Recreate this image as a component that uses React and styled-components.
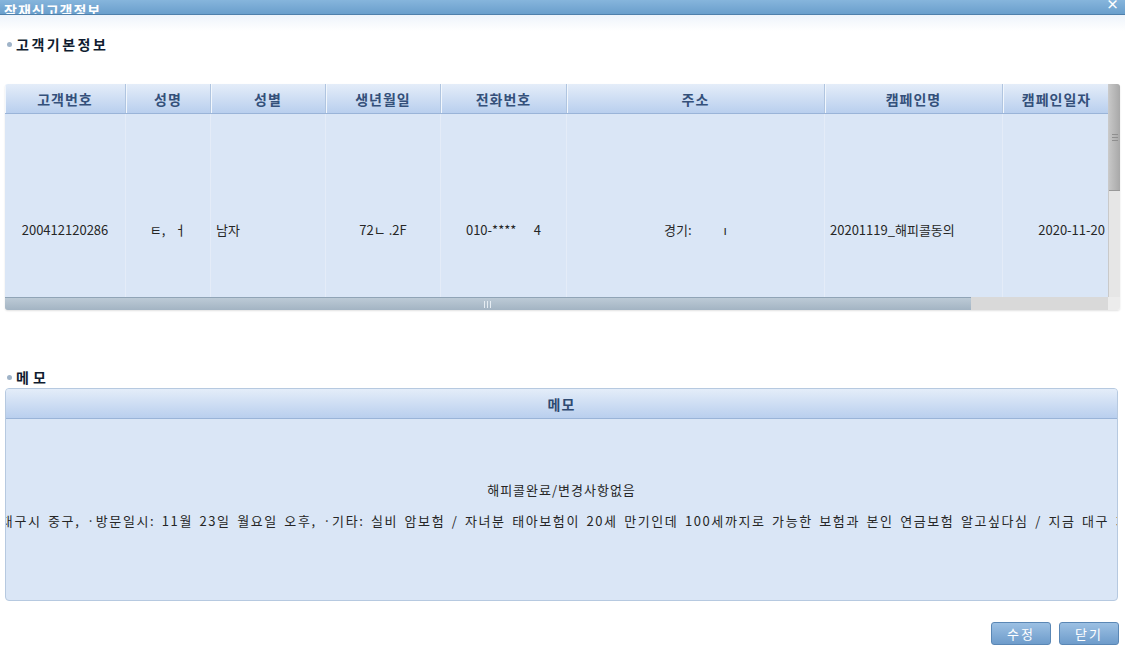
import React from 'react';
import styled, { createGlobalStyle } from 'styled-components';

const GlobalStyle = createGlobalStyle`
  html, body {
    margin: 0;
    padding: 0;
    background: #fff;
    font-family: "Noto Sans CJK KR", "Noto Sans", sans-serif;
  }
`;

const Page = styled.div`
  width: 1125px;
  height: 646px;
  overflow: hidden;
  background: #fff;
`;

const TitleBar = styled.div`
  height: 14px;
  overflow: hidden;
  display: flex;
  justify-content: space-between;
  align-items: flex-end;
  padding: 0 6px 0 4px;
  background: linear-gradient(#86b5dc, #6a9fcc);
  border-bottom: 1px solid #4f80ab;
`;

const TitleText = styled.span`
  color: #fff;
  font-size: 14px;
  font-weight: bold;
  line-height: 14px;
  margin-bottom: -3px;
  letter-spacing: 1px;
`;

const CloseMark = styled.span`
  color: #fff;
  font-size: 13px;
  font-weight: bold;
  line-height: 13px;
  margin-bottom: 4px;
`;

const Fade = styled.div`
  height: 16px;
  background: linear-gradient(#eef4fb, #fff);
`;

const Content = styled.div`
  padding: 0 5px;
`;

const SectionTitle = styled.div`
  display: flex;
  align-items: center;
  gap: 3px;
  height: 18px;
  margin-top: ${(p) => p.$top}px;
  font-size: 14px;
  font-weight: bold;
  letter-spacing: ${(p) => p.$spacing}px;
  color: #0f1c30;

  &::before {
    content: '';
    width: 5px;
    height: 5px;
    border-radius: 50%;
    background: #9fb3c8;
    margin-left: 2px;
    margin-right: 1px;
  }
`;

const Grid = styled.div`
  margin-top: 31px;
  width: 1115px;
  height: 226px;
  display: grid;
  grid-template-columns: 1103px 12px;
  grid-template-rows: 213px 13px;
  border-radius: 3px;
  box-shadow: 0 1px 2px rgba(0, 0, 0, 0.12);
  overflow: hidden;
`;

const GridMain = styled.div`
  display: flex;
  flex-direction: column;
  overflow: hidden;
`;

const cols = [121, 85, 115, 115, 126, 258, 178, 108];

const HeaderRow = styled.div`
  display: grid;
  grid-template-columns: ${cols.map((c) => c + 'px').join(' ')};
  height: 30px;
  flex: none;
  background: linear-gradient(#e4edf9, #b9cfee);
  border-bottom: 1px solid #9ab4d8;
  box-sizing: border-box;
`;

const HeadCell = styled.div`
  display: flex;
  align-items: center;
  justify-content: center;
  font-size: 14px;
  font-weight: bold;
  color: #34507a;
  letter-spacing: 1px;
  border-right: 1px solid #b0c5e0;
  box-shadow: inset 1px 0 0 #f2f7fd;
  white-space: nowrap;
  overflow: hidden;
`;

const BodyView = styled.div`
  flex: 1;
  overflow: hidden;
  background: #dae6f6;
`;

const DataRow = styled.div`
  display: grid;
  grid-template-columns: ${cols.map((c) => c + 'px').join(' ')};
  height: 230px;
`;

const Cell = styled.div`
  display: flex;
  align-items: center;
  justify-content: ${(p) => p.$align || 'center'};
  padding: 0 5px;
  font-size: 13px;
  color: #262626;
  border-right: 1px solid #e4ecf8;
  white-space: pre;
  overflow: hidden;
`;

const VScroll = styled.div`
  background: #e6e6e6;
  border-left: 1px solid #c9c9c9;
  display: flex;
  flex-direction: column;
`;

const VThumb = styled.div`
  height: 106px;
  display: flex;
  align-items: center;
  justify-content: center;
  background: linear-gradient(90deg, #c6c6c6, #a8a8a8);
  border-bottom: 1px solid #999;
`;

const VGrip = styled.div`
  width: 6px;
  height: 7px;
  background: repeating-linear-gradient(#8f8f8f 0 1px, transparent 1px 3px);
`;

const HScroll = styled.div`
  background: #d9d9d9;
  display: flex;
`;

const HThumb = styled.div`
  width: 966px;
  height: 100%;
  display: flex;
  align-items: center;
  justify-content: center;
  background: linear-gradient(#bccad6, #a3b4c3);
  border-top: 1px solid #90a4b6;
  box-sizing: border-box;
`;

const HGrip = styled.div`
  width: 8px;
  height: 7px;
  background: repeating-linear-gradient(90deg, #e6edf3 0 1px, transparent 1px 3px);
`;

const Corner = styled.div`
  background: #ececec;
`;

const MemoBox = styled.div`
  margin-top: 2px;
  width: 1113px;
  height: 213px;
  border: 1px solid #b6c9e0;
  border-radius: 4px;
  overflow: hidden;
  box-sizing: border-box;
  display: flex;
  flex-direction: column;
  background: #dae6f6;
`;

const MemoHead = styled.div`
  height: 30px;
  flex: none;
  display: flex;
  align-items: center;
  justify-content: center;
  background: linear-gradient(#e4edf9, #b9cfee);
  border-bottom: 1px solid #9ab4d8;
  box-sizing: border-box;
  font-size: 14px;
  font-weight: bold;
  color: #2f4a72;
  letter-spacing: 1px;
`;

const MemoBody = styled.div`
  flex: 1;
  display: flex;
  flex-direction: column;
  align-items: center;
  justify-content: center;
  padding-bottom: 9px;
  overflow: hidden;
`;

const MemoLine = styled.div`
  font-size: 13px;
  line-height: 31px;
  letter-spacing: ${(p) => p.$spacing || 1}px;
  word-spacing: 2px;
  color: #262626;
  white-space: nowrap;
`;

const ButtonBar = styled.div`
  display: flex;
  justify-content: flex-end;
  gap: 8px;
  margin-top: 21px;
  padding-right: 1px;
`;

const Button = styled.button`
  width: 60px;
  height: 23px;
  padding: 0;
  border: 1px solid #5a87b5;
  border-radius: 3px;
  background: linear-gradient(#9cc0e3, #6e9ccb);
  color: #fff;
  font-family: inherit;
  font-size: 13px;
  letter-spacing: 2px;
`;

const columns = ['고객번호', '성명', '성별', '생년월일', '전화번호', '주소', '캠페인명', '캠페인일자'];

const row = [
  { v: '200412120286' },
  { v: 'ㅌ,   ㅓ' },
  { v: '남자', a: 'flex-start' },
  { v: '72ㄴ .2F' },
  { v: '010-****      4' },
  { v: '경기:           ı' },
  { v: '20201119_해피콜동의', a: 'flex-start' },
  { v: '2020-11-20', a: 'flex-end' },
];

const memo =
  '·주소: 대구시 중구, ·방문일시: 11월 23일 월요일 오후, ·기타: 실비 암보험 / 자녀분 태아보험이 20세 만기인데 100세까지로 가능한 보험과 본인 연금보험 알고싶다심 / 지금 대구 지역에서';

export default function App() {
  return (
    <Page>
      <GlobalStyle />
      <TitleBar>
        <TitleText>잠재신고객정보</TitleText>
        <CloseMark>×</CloseMark>
      </TitleBar>
      <Fade />
      <Content>
        <SectionTitle $top={4} $spacing={2.5}>고객기본정보</SectionTitle>
        <Grid>
          <GridMain>
            <HeaderRow>
              {columns.map((c) => (
                <HeadCell key={c}>{c}</HeadCell>
              ))}
            </HeaderRow>
            <BodyView>
              <DataRow>
                {row.map((c, i) => (
                  <Cell key={i} $align={c.a}>{c.v}</Cell>
                ))}
              </DataRow>
            </BodyView>
          </GridMain>
          <VScroll>
            <VThumb>
              <VGrip />
            </VThumb>
          </VScroll>
          <HScroll>
            <HThumb>
              <HGrip />
            </HThumb>
          </HScroll>
          <Corner />
        </Grid>
        <SectionTitle $top={58} $spacing={4}>메모</SectionTitle>
        <MemoBox>
          <MemoHead>메모</MemoHead>
          <MemoBody>
            <MemoLine>해피콜완료/변경사항없음</MemoLine>
            <MemoLine $spacing={1.6}>{memo}</MemoLine>
          </MemoBody>
        </MemoBox>
        <ButtonBar>
          <Button>수정</Button>
          <Button>닫기</Button>
        </ButtonBar>
      </Content>
    </Page>
  );
}
